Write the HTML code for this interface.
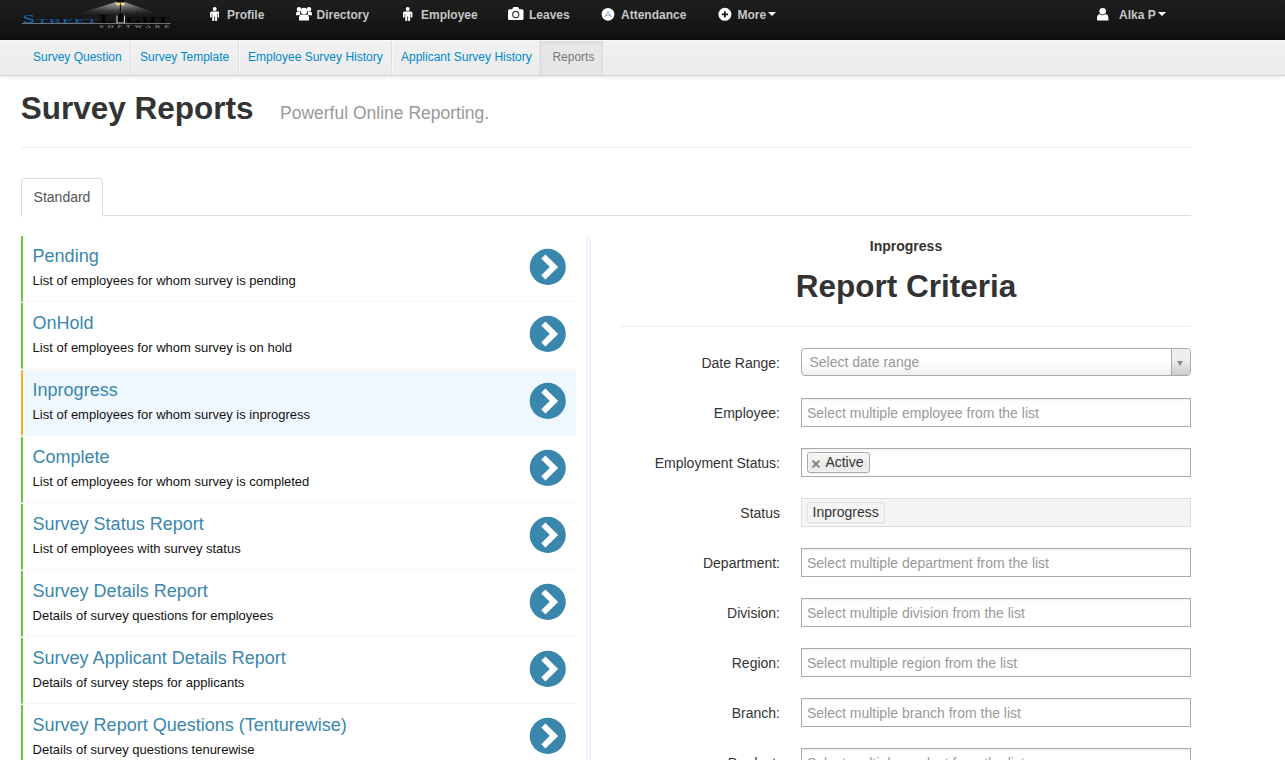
<!DOCTYPE html>
<html lang="en">
<head>
<meta charset="utf-8">
<title>Survey Reports</title>
<style>
*{box-sizing:content-box;}
html,body{margin:0;padding:0;}
body{width:1285px;height:760px;overflow:hidden;background:#fff;color:#333;font-family:"Liberation Sans",Arial,Helvetica,sans-serif;font-size:13px;line-height:18px;position:relative;}
a{text-decoration:none;color:#0088cc;}
/* ---------- top navbar ---------- */
.navbar{position:absolute;left:0;top:0;width:1285px;height:40px;background:linear-gradient(to bottom,#1f1f1f 0,#161616 55%,#111 100%);}
.navbar .brand{position:absolute;left:0;top:0;}
.navbar ul{list-style:none;margin:0;padding:0;}
.navbar .ic{position:absolute;}
.navbar .nav-item{position:absolute;top:6px;height:18px;line-height:18px;font-size:12px;font-weight:bold;color:#c6c6c6;white-space:nowrap;}
.navbar .nav-item svg{position:absolute;top:0;}
.caret{display:inline-block;width:0;height:0;border-left:4px solid transparent;border-right:4px solid transparent;border-top:4px solid #fff;vertical-align:middle;margin-left:2px;margin-top:-3px;}
/* ---------- subnav ---------- */
.subnav{position:absolute;left:0;top:40px;width:1285px;height:34px;background:linear-gradient(to bottom,#f1f1f1 0,#ececec 100%);border-top:1px solid #f6f6f6;border-bottom:1px solid #d2d2d2;box-shadow:0 1px 4px rgba(0,0,0,.10);}
.subnav ul{list-style:none;margin:0;padding:0 0 0 21px;height:34px;}
.subnav li{float:left;height:34px;}
.subnav li a{display:block;box-sizing:border-box;height:34px;line-height:32px;padding:0 0 0 8px;font-size:12px;color:#0088cc;border-left:1px solid #f7f7f7;border-right:1px solid #e0e0e0;white-space:nowrap;overflow:hidden;}
.subnav li:first-child a{border-left:0;padding-left:12px;}
.subnav li.active a{background:#e7e7e7;color:#777;padding-left:11.4px;border-right-color:#dedede;border-left-color:#dfdfdf;box-shadow:inset 0 2px 4px rgba(0,0,0,.05);}
/* ---------- page header ---------- */
.page-header{position:absolute;left:21px;top:75px;width:1170px;height:72px;border-bottom:1px solid #eeeeee;}
.page-header h1{margin:0;position:absolute;left:-0.3px;top:12.5px;font-size:31.5px;line-height:40px;font-weight:bold;color:#333;white-space:nowrap;letter-spacing:0;}
.page-header small{position:absolute;left:259px;top:28px;font-size:17.5px;line-height:20px;font-weight:normal;color:#999;white-space:nowrap;}
/* ---------- tabs ---------- */
.tabs{position:absolute;left:21px;top:178px;width:1170px;height:37px;border-bottom:1px solid #ddd;}
.tabs .tab{position:absolute;left:0;top:0;width:80px;height:37px;border:1px solid #ddd;border-bottom:1px solid #fff;border-radius:4px 4px 0 0;background:#fff;line-height:37px;text-align:center;font-size:14px;color:#555;}
/* ---------- report list ---------- */
.reports{position:absolute;left:21px;top:236px;width:555px;}
.report{position:relative;height:65px;margin-bottom:1px;border-left:2px solid #6cc63c;border-bottom:1px solid #f6f6f6;background:#fff;}
.report.sel{border-left-color:#f9b023;background:#eff7ff;border-bottom-color:#eff7ff;}
.report h4{margin:0;position:absolute;left:9.6px;top:9px;font-size:18px;line-height:22px;font-weight:normal;color:#3a87ad;white-space:nowrap;}
.report p{margin:0;position:absolute;left:9.6px;top:36px;font-size:13px;line-height:18px;color:#111;white-space:nowrap;}
.report svg{position:absolute;left:506px;top:12px;}
.vsep{position:absolute;left:586px;top:236px;width:1px;height:524px;border-left:2px solid #eef5ff;border-right:2px solid #eef5ff;}
/* ---------- criteria ---------- */
.crit-sub{position:absolute;left:621px;top:236px;width:570px;text-align:center;font-size:14px;font-weight:bold;line-height:20px;color:#333;}
.crit-title{position:absolute;left:621px;top:266px;width:570px;text-align:center;font-size:31.5px;font-weight:bold;line-height:40px;color:#333;margin:0;}
.crit-hr{position:absolute;left:621px;top:326px;width:570px;height:1px;background:#eee;}
.row{position:absolute;left:621px;width:570px;height:30px;}
.row label{position:absolute;left:0;top:5px;width:159px;text-align:right;font-size:14px;line-height:20px;color:#333;white-space:nowrap;}
.row .ctl{position:absolute;left:180px;top:0;width:388px;height:27px;border:1px solid #aaa;background:#fff;box-shadow:inset 0 1px 2px rgba(0,0,0,.08);}
.row .ctl .ph{position:absolute;left:5px;top:5px;font-size:14px;line-height:18px;color:#999;white-space:nowrap;}
.row .ctl.single{height:26px;border-radius:4px;background:linear-gradient(to bottom,#fff 50%,#eee 100%);box-shadow:none;}
.row .ctl.single .ph{left:7.5px;top:4px;}
.row .ctl.single .arrow{position:absolute;right:0;top:0;width:18px;height:26px;border-left:1px solid #aaa;border-radius:0 3px 3px 0;background:linear-gradient(to bottom,#eee 40%,#ccc 100%);}
.row .ctl.single .arrow b{position:absolute;left:5px;top:11.5px;width:0;height:0;border-left:3px solid transparent;border-right:3px solid transparent;border-top:5px solid #888;}
.row .ctl.dis{background:#f4f4f4;border-color:#ddd;box-shadow:none;}
.choice{position:absolute;left:5px;top:3px;height:19px;line-height:18px;border:1px solid #aaa;border-radius:3px;background:linear-gradient(to bottom,#f4f4f4 0,#f1f1f1 47%,#e8e8e8 53%,#eee 100%);font-size:14px;color:#333;padding:0 5px 0 17.4px;box-shadow:0 0 2px #fff inset,0 1px 0 rgba(0,0,0,.05);}
.choice .x{position:absolute;left:4.3px;top:7.2px;}
.choice.locked{padding-left:4.6px;border-color:#e2e2e2;background:#f4f4f4;box-shadow:0 1px 1px rgba(0,0,0,.04);}
</style>
</head>
<body>

<div class="navbar">
  <svg class="brand" width="200" height="40" viewBox="0 0 200 40">
    <defs>
      <linearGradient id="cone" x1="0" y1="0" x2="0" y2="1">
        <stop offset="0" stop-color="#cfcfcf" stop-opacity=".95"/>
        <stop offset=".5" stop-color="#8a8a8a" stop-opacity=".7"/>
        <stop offset="1" stop-color="#444" stop-opacity=".05"/>
      </linearGradient>
      <linearGradient id="coneh" x1="0" y1="0" x2="1" y2="0">
        <stop offset="0" stop-color="#181818" stop-opacity=".75"/>
        <stop offset=".3" stop-color="#181818" stop-opacity=".2"/>
        <stop offset=".5" stop-color="#181818" stop-opacity="0"/>
        <stop offset=".7" stop-color="#181818" stop-opacity=".2"/>
        <stop offset="1" stop-color="#181818" stop-opacity=".75"/>
      </linearGradient>
    </defs>
    <polygon points="120.6,0.5 73,15.5 162,15.5" fill="url(#cone)"/>
    <polygon points="120.6,0.5 73,15.5 162,15.5" fill="url(#coneh)"/>
    <rect x="116.8" y="0" width="7.4" height="2.6" fill="#0b0b0b"/>
    <rect x="116.4" y="2.7" width="7.8" height="2.3" fill="#efe27e"/>
    <rect x="119.8" y="2.7" width="1.3" height="2.3" fill="#6a5d20"/>
    <rect x="116.2" y="5.2" width="8.4" height=".8" fill="#bdbdbd" opacity=".7"/>
    <rect x="119.9" y="5" width="1.2" height="11" fill="#050505"/>
    <rect x="120.9" y="6" width=".5" height="9" fill="#aaa" opacity=".6"/>
    <path d="M117 15.4v7.6h7.4v-7.6" fill="#050505" stroke="#d6d6d6" stroke-width="1.1"/>
    <rect x="119.3" y="13.5" width="2.6" height="8.6" fill="#050505"/>
    <text x="22.6" y="23.1" font-family="Liberation Serif,serif" font-size="12.2" fill="#0f6fc4" textLength="12.6" lengthAdjust="spacingAndGlyphs">S</text>
    <text x="36.4" y="23.1" font-family="Liberation Serif,serif" font-size="7" fill="#0f6fc4" opacity=".85" textLength="61.6" lengthAdjust="spacingAndGlyphs">TREET</text>
    <text x="99.6" y="23.1" font-family="Liberation Serif,serif" font-size="12.8" font-weight="bold" fill="#020202" textLength="14.2" lengthAdjust="spacingAndGlyphs">L</text>
    <text x="126.2" y="23.1" font-family="Liberation Serif,serif" font-size="7.6" font-weight="bold" fill="#020202" textLength="43.4" lengthAdjust="spacingAndGlyphs">GHT</text>
    <rect x="21.9" y="23.1" width="148.6" height=".9" fill="#7d7d7d"/>
    <text transform="translate(99.2,28.1) scale(2,1)" font-family="Liberation Serif,serif" font-size="3.9" fill="#a8a8a8" textLength="35" lengthAdjust="spacing">SOFTWARE</text>
  </svg>

  <svg class="ic" style="left:209.8px;top:6.5px" width="9.4" height="14.6" viewBox="0 0 9.5 15" preserveAspectRatio="none"><path d="M4.75 0a2.05 2.05 0 1 1 0 4.1a2.05 2.05 0 1 1 0-4.1zM1.7 4.5h6.1a1.7 1.7 0 0 1 1.7 1.7v3.9a.85.85 0 0 1-1.7 0v-3.3h-.55v6.9a1.05 1.05 0 0 1-2.1 0v-3.9h-.8v3.9a1.05 1.05 0 0 1-2.1 0v-6.9h-.55v3.3a.85.85 0 0 1-1.7 0v-3.9a1.7 1.7 0 0 1 1.7-1.7z" fill="#fff"/></svg>
  <div class="nav-item" style="left:227px">Profile</div>
  <svg class="ic" style="left:296.2px;top:5.8px" width="16" height="15" viewBox="0 0 16 15"><circle cx="3.1" cy="3.3" r="2.3" fill="#fff"/><circle cx="12.9" cy="3.3" r="2.3" fill="#fff"/><path d="M0 9.3v-1.4a2.3 2.3 0 0 1 2.3-2.3h1.8a4.6 4.6 0 0 0 .5 3.1a4 4 0 0 0-1.6.6zM16 9.3v-1.4a2.3 2.3 0 0 0-2.3-2.3h-1.8a4.6 4.6 0 0 1-.5 3.1a4 4 0 0 1 1.6.6z" fill="#fff"/><circle cx="8" cy="5" r="3.2" fill="#fff"/><path d="M3 14.5v-2.6a3.3 3.3 0 0 1 3.3-3.3h3.4a3.3 3.3 0 0 1 3.3 3.3v2.6z" fill="#fff"/></svg>
  <div class="nav-item" style="left:316.5px">Directory</div>
  <svg class="ic" style="left:403.4px;top:6.5px" width="9.4" height="14.6" viewBox="0 0 9.5 15" preserveAspectRatio="none"><path d="M4.75 0a2.05 2.05 0 1 1 0 4.1a2.05 2.05 0 1 1 0-4.1zM1.7 4.5h6.1a1.7 1.7 0 0 1 1.7 1.7v3.9a.85.85 0 0 1-1.7 0v-3.3h-.55v6.9a1.05 1.05 0 0 1-2.1 0v-3.9h-.8v3.9a1.05 1.05 0 0 1-2.1 0v-6.9h-.55v3.3a.85.85 0 0 1-1.7 0v-3.9a1.7 1.7 0 0 1 1.7-1.7z" fill="#fff"/></svg>
  <div class="nav-item" style="left:421px">Employee</div>
  <svg class="ic" style="left:508px;top:7px" width="16" height="13" viewBox="0 0 16 13"><path d="M1.6 2.3h2.6l.7-1.6a1.1 1.1 0 0 1 1-.7h3.7a1.1 1.1 0 0 1 1 .7l.7 1.6h2.6a1.6 1.6 0 0 1 1.6 1.6v7.5a1.6 1.6 0 0 1-1.6 1.6h-12.3a1.6 1.6 0 0 1-1.6-1.6v-7.5a1.6 1.6 0 0 1 1.6-1.6z" fill="#fff"/><circle cx="7.75" cy="7.5" r="3.1" fill="none" stroke="#33384a" stroke-width="1.1"/></svg>
  <div class="nav-item" style="left:529px">Leaves</div>
  <svg class="ic" style="left:601px;top:7px" width="15" height="15" viewBox="-0.5 -0.8 15 15"><circle cx="6.5" cy="6.5" r="6.4" fill="#fff"/><path d="M3.2 9.2l3.3-5.6l3.3 5.6M4.3 7.5h4.4" fill="none" stroke="#8d9cb8" stroke-width=".9"/></svg>
  <div class="nav-item" style="left:621px">Attendance</div>
  <svg class="ic" style="left:718px;top:7px" width="15" height="15" viewBox="-0.4 -0.8 15 15"><circle cx="6.5" cy="6.5" r="6.5" fill="#fff"/><path d="M3.3 6.6h6.4M6.5 3.4v6.4" stroke="#1a1a1a" stroke-width="1.8" fill="none"/></svg>
  <div class="nav-item" style="left:737.4px">More<span class="caret"></span></div>
  <svg class="ic" style="left:1096.8px;top:7.5px" width="12" height="13" viewBox="0 0 12 13"><circle cx="5.7" cy="3.3" r="3.3" fill="#fff"/><path d="M0 12.5v-3.2a3.4 3.4 0 0 1 2.6-3.3a4.4 4.4 0 0 0 6.2 0a3.4 3.4 0 0 1 2.6 3.3v3.2z" fill="#fff"/></svg>
  <div class="nav-item" style="left:1119px">Alka P<span class="caret"></span></div>
</div>

<div class="subnav">
  <ul>
    <li><a style="width:110px">Survey Question</a></li>
    <li><a style="width:108px">Survey Template</a></li>
    <li><a style="width:153px">Employee Survey History</a></li>
    <li><a style="width:148px">Applicant Survey History</a></li>
    <li class="active"><a style="width:63px">Reports</a></li>
  </ul>
</div>

<div class="page-header">
  <h1>Survey Reports</h1>
  <small>Powerful Online Reporting.</small>
</div>

<div class="tabs"><div class="tab">Standard</div></div>

<div class="reports">
  <div class="report"><h4>Pending</h4><p>List of employees for whom survey is pending</p><svg width="38" height="38" viewBox="-0.25 -0.4 38 38"><circle cx="18.5" cy="18.5" r="18.05" fill="#3a87ad"/><path d="M14.1 8.1 L24.7 18.5 L14.1 28.9" fill="none" stroke="#fff" stroke-width="5.9" stroke-linejoin="miter"/></svg></div>
  <div class="report"><h4>OnHold</h4><p>List of employees for whom survey is on hold</p><svg width="38" height="38" viewBox="-0.25 -0.4 38 38"><circle cx="18.5" cy="18.5" r="18.05" fill="#3a87ad"/><path d="M14.1 8.1 L24.7 18.5 L14.1 28.9" fill="none" stroke="#fff" stroke-width="5.9" stroke-linejoin="miter"/></svg></div>
  <div class="report sel"><h4>Inprogress</h4><p>List of employees for whom survey is inprogress</p><svg width="38" height="38" viewBox="-0.25 -0.4 38 38"><circle cx="18.5" cy="18.5" r="18.05" fill="#3a87ad"/><path d="M14.1 8.1 L24.7 18.5 L14.1 28.9" fill="none" stroke="#fff" stroke-width="5.9" stroke-linejoin="miter"/></svg></div>
  <div class="report"><h4>Complete</h4><p>List of employees for whom survey is completed</p><svg width="38" height="38" viewBox="-0.25 -0.4 38 38"><circle cx="18.5" cy="18.5" r="18.05" fill="#3a87ad"/><path d="M14.1 8.1 L24.7 18.5 L14.1 28.9" fill="none" stroke="#fff" stroke-width="5.9" stroke-linejoin="miter"/></svg></div>
  <div class="report"><h4>Survey Status Report</h4><p>List of employees with survey status</p><svg width="38" height="38" viewBox="-0.25 -0.4 38 38"><circle cx="18.5" cy="18.5" r="18.05" fill="#3a87ad"/><path d="M14.1 8.1 L24.7 18.5 L14.1 28.9" fill="none" stroke="#fff" stroke-width="5.9" stroke-linejoin="miter"/></svg></div>
  <div class="report"><h4>Survey Details Report</h4><p>Details of survey questions for employees</p><svg width="38" height="38" viewBox="-0.25 -0.4 38 38"><circle cx="18.5" cy="18.5" r="18.05" fill="#3a87ad"/><path d="M14.1 8.1 L24.7 18.5 L14.1 28.9" fill="none" stroke="#fff" stroke-width="5.9" stroke-linejoin="miter"/></svg></div>
  <div class="report"><h4>Survey Applicant Details Report</h4><p>Details of survey steps for applicants</p><svg width="38" height="38" viewBox="-0.25 -0.4 38 38"><circle cx="18.5" cy="18.5" r="18.05" fill="#3a87ad"/><path d="M14.1 8.1 L24.7 18.5 L14.1 28.9" fill="none" stroke="#fff" stroke-width="5.9" stroke-linejoin="miter"/></svg></div>
  <div class="report"><h4>Survey Report Questions (Tenturewise)</h4><p>Details of survey questions tenurewise</p><svg width="38" height="38" viewBox="-0.25 -0.4 38 38"><circle cx="18.5" cy="18.5" r="18.05" fill="#3a87ad"/><path d="M14.1 8.1 L24.7 18.5 L14.1 28.9" fill="none" stroke="#fff" stroke-width="5.9" stroke-linejoin="miter"/></svg></div>
</div>
<div class="vsep"></div>

<div class="crit-sub">Inprogress</div>
<h2 class="crit-title">Report Criteria</h2>
<div class="crit-hr"></div>

<div class="row" style="top:348px"><label>Date Range:</label><div class="ctl single"><span class="ph">Select date range</span><span class="arrow"><b></b></span></div></div>
<div class="row" style="top:398px"><label>Employee:</label><div class="ctl"><span class="ph">Select multiple employee from the list</span></div></div>
<div class="row" style="top:448px"><label>Employment Status:</label><div class="ctl"><span class="choice"><svg class="x" width="8" height="8" viewBox="0 0 8 8"><path d="M1.2 1.2 L6.8 6.8 M6.8 1.2 L1.2 6.8" stroke="#8a8a8a" stroke-width="2.1" stroke-linecap="round"/></svg>Active</span></div></div>
<div class="row" style="top:498px"><label>Status</label><div class="ctl dis"><span class="choice locked">Inprogress</span></div></div>
<div class="row" style="top:548px"><label>Department:</label><div class="ctl"><span class="ph">Select multiple department from the list</span></div></div>
<div class="row" style="top:598px"><label>Division:</label><div class="ctl"><span class="ph">Select multiple division from the list</span></div></div>
<div class="row" style="top:648px"><label>Region:</label><div class="ctl"><span class="ph">Select multiple region from the list</span></div></div>
<div class="row" style="top:698px"><label>Branch:</label><div class="ctl"><span class="ph">Select multiple branch from the list</span></div></div>
<div class="row" style="top:748px"><label>Product:</label><div class="ctl"><span class="ph">Select multiple product from the list</span></div></div>

</body>
</html>
